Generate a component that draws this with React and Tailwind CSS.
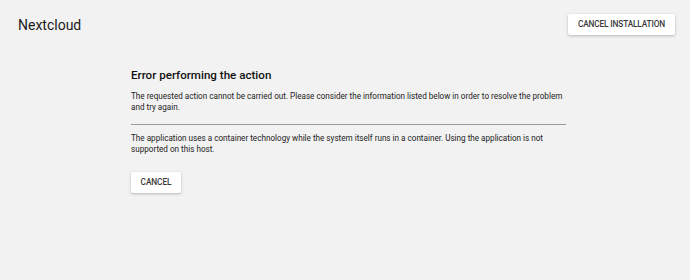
export default function App() {
  return (
    <div className="w-[690px] h-[280px] bg-[#f2f2f2] font-['Roboto',sans-serif] text-[#222] overflow-hidden">
      {/* Header */}
      <div className="flex items-start justify-between pl-[18px] pr-[15px] pt-[14px]">
        <h1 className="text-[14px] leading-[21px] mt-[1px] text-[#1a1a1a]">Nextcloud</h1>
        <button className="h-[21px] w-[107px] bg-white rounded-[2px] shadow-[0_1px_3px_rgba(0,0,0,0.25)] text-[8.3px] font-medium tracking-[-0.15px] uppercase text-[#3a3a3a]">
          Cancel installation
        </button>
      </div>

      {/* Error panel */}
      <div className="ml-[131px] w-[435px] mt-[31px]">
        <h2 className="text-[11.6px] font-medium leading-[16px] text-[#111]">Error performing the action</h2>
        <p className="mt-[8px] text-[8.15px] leading-[10.5px] text-[#222]">
          The requested action cannot be carried out. Please consider the information listed below in order to resolve the problem and try again.
        </p>
        <hr className="mt-[12px] border-t border-[#9a9a9a]" />
        <p className="mt-[8px] text-[8.15px] leading-[10.5px] text-[#222]">
          The application uses a container technology while the system itself runs in a container. Using the application is not supported on this host.
        </p>
        <button className="mt-[18px] h-[21px] w-[50px] bg-white rounded-[2px] shadow-[0_1px_3px_rgba(0,0,0,0.25)] text-[8.3px] font-medium tracking-[-0.1px] uppercase text-[#3a3a3a]">
          Cancel
        </button>
      </div>
    </div>
  );
}
